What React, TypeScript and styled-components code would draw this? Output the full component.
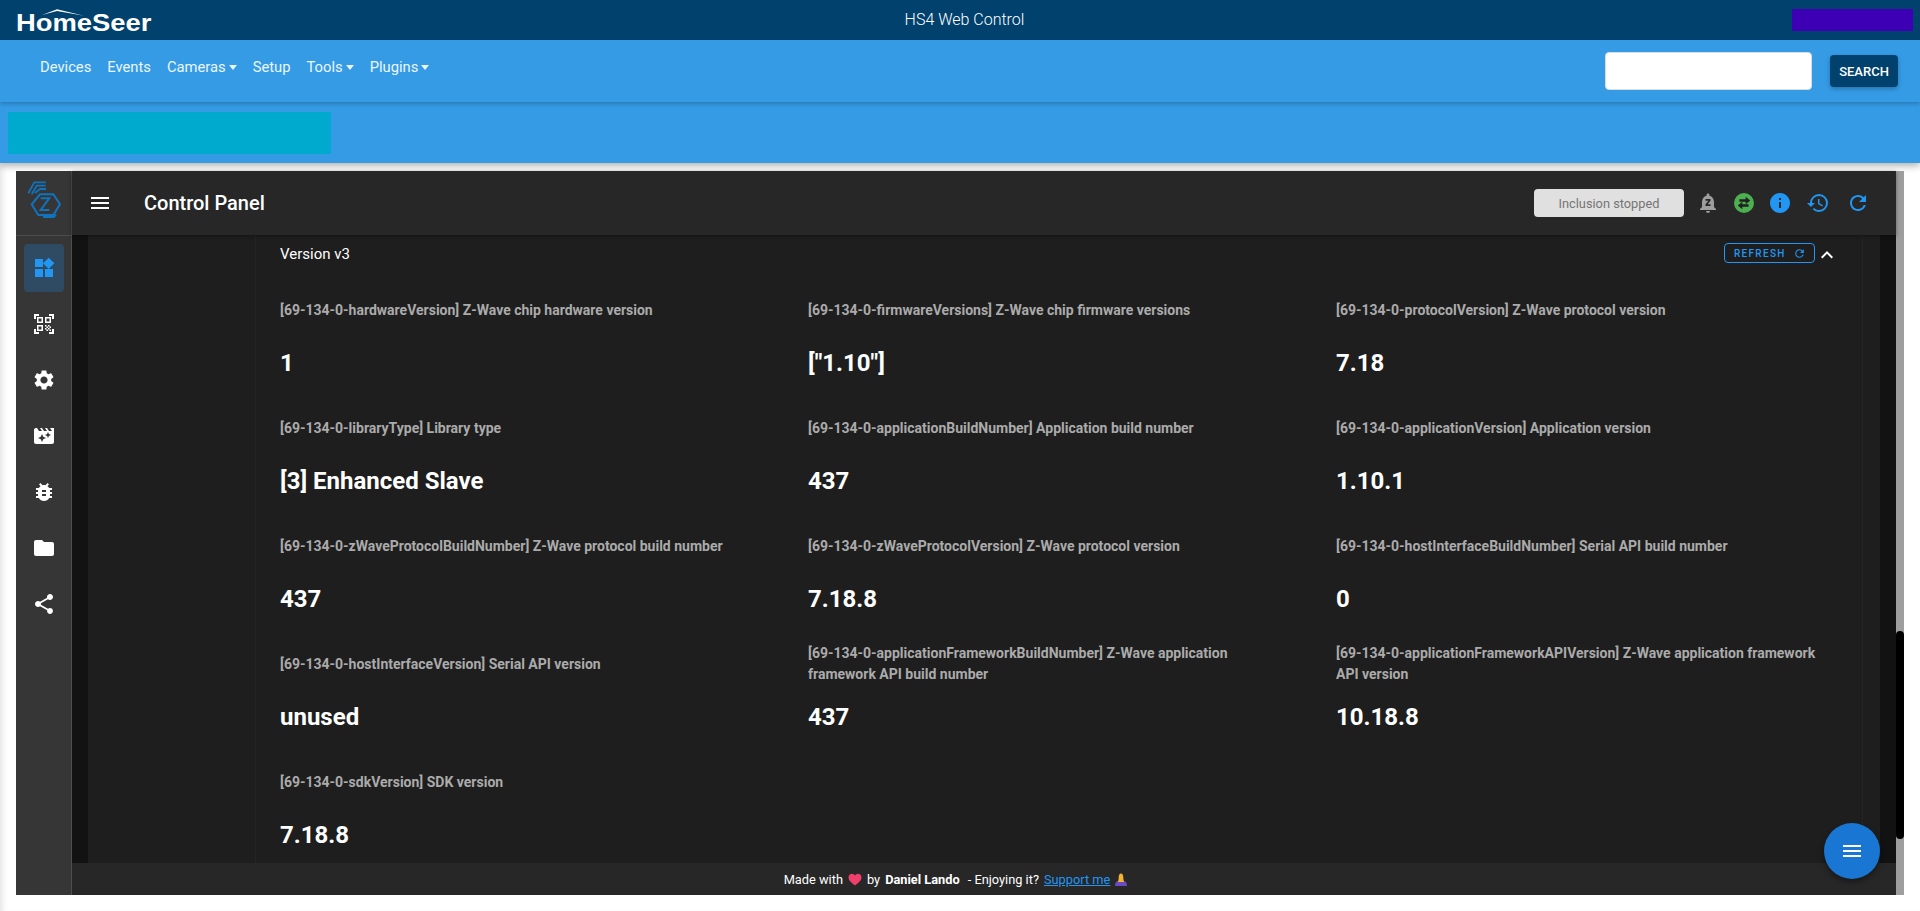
import styled, { createGlobalStyle } from "styled-components";
import {
  MdBugReport,
  MdExpandLess,
  MdFolder,
  MdHistory,
  MdInfo,
  MdMenu,
  MdMovieFilter,
  MdNotificationsPaused,
  MdQrCodeScanner,
  MdRefresh,
  MdSettings,
  MdShare,
  MdWidgets,
} from "react-icons/md";

const GlobalStyle = createGlobalStyle`
  html, body {
    margin: 0;
    padding: 0;
    height: 100%;
    background: #ffffff;
    overflow: hidden;
  }
  * {
    box-sizing: border-box;
  }
`;

const navItems = [
  { label: "Devices" },
  { label: "Events" },
  { label: "Cameras", caret: true },
  { label: "Setup" },
  { label: "Tools", caret: true },
  { label: "Plugins", caret: true },
];

const sideItems = [
  { icon: <MdWidgets />, active: true },
  { icon: <MdQrCodeScanner /> },
  { icon: <MdSettings /> },
  { icon: <MdMovieFilter /> },
  { icon: <MdBugReport /> },
  { icon: <MdFolder /> },
  { icon: <MdShare /> },
];

const values = [
  { label: "[69-134-0-hardwareVersion] Z-Wave chip hardware version", value: "1" },
  { label: "[69-134-0-firmwareVersions] Z-Wave chip firmware versions", value: '["1.10"]' },
  { label: "[69-134-0-protocolVersion] Z-Wave protocol version", value: "7.18" },
  { label: "[69-134-0-libraryType] Library type", value: "[3] Enhanced Slave" },
  { label: "[69-134-0-applicationBuildNumber] Application build number", value: "437" },
  { label: "[69-134-0-applicationVersion] Application version", value: "1.10.1" },
  { label: "[69-134-0-zWaveProtocolBuildNumber] Z-Wave protocol build number", value: "437" },
  { label: "[69-134-0-zWaveProtocolVersion] Z-Wave protocol version", value: "7.18.8" },
  { label: "[69-134-0-hostInterfaceBuildNumber] Serial API build number", value: "0" },
  { label: "[69-134-0-hostInterfaceVersion] Serial API version", value: "unused" },
  {
    label: "[69-134-0-applicationFrameworkBuildNumber] Z-Wave application framework API build number",
    value: "437",
  },
  {
    label: "[69-134-0-applicationFrameworkAPIVersion] Z-Wave application framework API version",
    value: "10.18.8",
  },
  { label: "[69-134-0-sdkVersion] SDK version", value: "7.18.8" },
];

export default function App() {
  return (
    <Page>
      <GlobalStyle />
      <TopBar>
        <Logo>
          <LogoRoof viewBox="0 0 42 7" preserveAspectRatio="none">
            <path d="M0 6 L15 0.3 L42 6.7 L15 2 Z" fill="#ffffff" />
          </LogoRoof>
          <LogoText>HomeSeer</LogoText>
        </Logo>
        <TopTitle>HS4 Web Control</TopTitle>
        <PurpleBlock />
      </TopBar>
      <NavBar>
        <NavList>
          {navItems.map((item) => (
            <NavLink key={item.label}>
              {item.label}
              {item.caret && <Caret />}
            </NavLink>
          ))}
        </NavList>
        <SearchForm>
          <SearchInput />
          <SearchButton>SEARCH</SearchButton>
        </SearchForm>
      </NavBar>
      <Banner>
        <TealBlock />
      </Banner>
      <Frame>
        <Sidebar>
          <SideLogo>
            <svg width="55" height="64" viewBox="0 0 55 64" fill="none" stroke="#1173bd" strokeWidth="1.8">
              <path d="M12.3 22.3 L18.3 11.3 H29.7" />
              <path d="M15.7 23.3 L20.7 14.7 H29.7" />
              <path d="M19 22 L24 18 H30" />
              <path d="M24 23.3 H37.3 L44 33.3 L37.3 44 H22.3 L15.7 33.3 Z" strokeWidth="2" />
              <path d="M24.7 27.3 H33.3 L24.7 39 H33.3" strokeWidth="2" />
              <path d="M27 46 H38 L40 43.5" />
            </svg>
          </SideLogo>
          <SideList>
            {sideItems.map((item, i) => (
              <SideItem key={i} $active={item.active}>
                {item.icon}
              </SideItem>
            ))}
          </SideList>
        </Sidebar>
        <Main>
          <Header>
            <HeaderButton>
              <MdMenu />
            </HeaderButton>
            <HeaderTitle>Control Panel</HeaderTitle>
            <HeaderActions>
              <StatusChip>Inclusion stopped</StatusChip>
              <ActionIcon $color="#9e9e9e">
                <MdNotificationsPaused />
              </ActionIcon>
              <ActionIcon $color="#212121">
                <GreenDot>
                  <svg width="20" height="20" viewBox="0 0 24 24" fill="currentColor">
                    <path d="M14 4.5 L19.5 9 L14 13.5 V10.4 H6.5 V7.6 H14 Z" />
                    <path d="M10 10.5 L4.5 15 L10 19.5 V16.4 H17.5 V13.6 H10 Z" />
                  </svg>
                </GreenDot>
              </ActionIcon>
              <ActionIcon $color="#2196f3">
                <MdInfo />
              </ActionIcon>
              <ActionIcon $color="#2196f3" $wide>
                <MdHistory />
              </ActionIcon>
              <ActionIcon $color="#2196f3" $wide>
                <MdRefresh />
              </ActionIcon>
            </HeaderActions>
          </Header>
          <ContentRow>
            <Gutter />
            <Card>
              <CardInner>
                <CardHead>
                  <CardTitle>Version v3</CardTitle>
                  <RefreshButton>
                    REFRESH
                    <MdRefresh />
                  </RefreshButton>
                  <CollapseIcon>
                    <MdExpandLess />
                  </CollapseIcon>
                </CardHead>
                <ValueGrid>
                  {values.map((v) => (
                    <ValueCell key={v.label}>
                      <ValueLabel>{v.label}</ValueLabel>
                      <ValueText>{v.value}</ValueText>
                    </ValueCell>
                  ))}
                </ValueGrid>
              </CardInner>
            </Card>
            <Gutter />
          </ContentRow>
          <Footer>
            Made with
            <svg width="14" height="13" viewBox="0 0 14 13">
              <path
                d="M7 12.5 C2.5 9 0.5 7 0.5 4.2 C0.5 2 2.2 0.7 3.9 0.7 C5.2 0.7 6.3 1.4 7 2.6 C7.7 1.4 8.8 0.7 10.1 0.7 C11.8 0.7 13.5 2 13.5 4.2 C13.5 7 11.5 9 7 12.5 Z"
                fill="#ef3f6b"
              />
            </svg>
            by <strong>Daniel Lando</strong>
            <FooterText>- Enjoying it?</FooterText>
            <SupportLink>
              Support me
              <svg width="14" height="13" viewBox="0 0 14 13">
                <path d="M1 13 C1 9 3 8 4.5 8 H9.5 C11 8 13 9 13 13 Z" fill="#6a4bc4" />
                <path d="M4.6 6 C4.6 2 5.4 0.5 7 0.5 C8.6 0.5 9.4 2 9.4 6 L10 9 H4 Z" fill="#f2b431" />
              </svg>
            </SupportLink>
          </Footer>
          <Fab>
            <MdMenu />
          </Fab>
        </Main>
        <Scrollbar>
          <ScrollThumb />
        </Scrollbar>
      </Frame>
    </Page>
  );
}

const Page = styled.div`
  width: 1920px;
  height: 911px;
  display: flex;
  flex-direction: column;
  font-family: Roboto, "Liberation Sans", sans-serif;
  background: #ffffff;
  box-shadow: inset 7px 0 6px -5px rgba(0, 0, 0, 0.12);
  overflow: hidden;
`;

const TopBar = styled.div`
  height: 40px;
  flex: none;
  display: grid;
  grid-template-columns: 1fr auto 1fr;
  align-items: center;
  padding: 0 7px 0 16px;
  background: #00416d;
  color: #ffffff;
`;

const Logo = styled.div`
  position: relative;
  height: 40px;
  display: flex;
  align-items: center;
`;

const LogoRoof = styled.svg`
  position: absolute;
  left: 26px;
  top: 9px;
  width: 42px;
  height: 7px;
`;

const LogoText = styled.span`
  font-family: "Liberation Sans", sans-serif;
  font-size: 23px;
  font-weight: 700;
  line-height: 40px;
  padding-top: 5px;
  transform: scaleX(1.19);
  transform-origin: left center;
`;

const TopTitle = styled.div`
  font-size: 16px;
  font-weight: 300;
  line-height: 40px;
`;

const PurpleBlock = styled.div`
  justify-self: end;
  width: 121px;
  height: 22px;
  background: #3d00b5;
`;

const NavBar = styled.div`
  height: 62px;
  flex: none;
  display: flex;
  justify-content: space-between;
  padding: 12px 22px 0 32px;
  background: #359be5;
  box-shadow: 0 2px 4px rgba(0, 0, 0, 0.22);
  position: relative;
`;

const NavList = styled.div`
  display: flex;
  align-items: flex-start;
`;

const NavLink = styled.a`
  display: flex;
  align-items: center;
  padding: 0 8px;
  height: 30px;
  font-size: 14.75px;
  color: #ecf6fd;
`;

const Caret = styled.span`
  margin-left: 3px;
  border-top: 5px solid #ecf6fd;
  border-left: 4.5px solid transparent;
  border-right: 4.5px solid transparent;
`;

const SearchForm = styled.div`
  display: flex;
  align-items: flex-start;
  gap: 18px;
`;

const SearchInput = styled.div`
  width: 207px;
  height: 38px;
  background: #ffffff;
  border: 1px solid #d8dde2;
  border-radius: 4px;
`;

const SearchButton = styled.button`
  width: 68px;
  height: 32px;
  margin-top: 3px;
  padding: 0;
  border: none;
  border-radius: 4px;
  background: #00416d;
  color: #ffffff;
  font: 500 13px Roboto, sans-serif;
  box-shadow: 0 2px 4px rgba(0, 0, 0, 0.25);
`;

const Banner = styled.div`
  height: 61px;
  flex: none;
  padding: 10px 0 0 8px;
  background: #359be5;
  box-shadow: 0 3px 7px rgba(0, 0, 0, 0.3);
`;

const TealBlock = styled.div`
  width: 323px;
  height: 42px;
  background: #00a9ce;
`;

const Frame = styled.div`
  width: 1888px;
  height: 724px;
  margin: 8px 0 0 16px;
  flex: none;
  display: flex;
`;

const Sidebar = styled.div`
  width: 56px;
  flex: none;
  background: #363636;
  border-right: 1px solid #4e4e4e;
`;

const SideLogo = styled.div`
  height: 65px;
  display: flex;
  border-bottom: 1px solid #4e4e4e;
`;

const SideList = styled.div`
  display: flex;
  flex-direction: column;
  gap: 8px;
  padding: 8px 8px 0;
`;

const SideItem = styled.div<{ $active?: boolean }>`
  width: 40px;
  height: 48px;
  display: flex;
  align-items: center;
  justify-content: center;
  border-radius: 4px;
  font-size: 24px;
  color: ${(p) => (p.$active ? "#2196f3" : "#ffffff")};
  background: ${(p) => (p.$active ? "#2f4b63" : "transparent")};
`;

const Main = styled.div`
  position: relative;
  flex: 1;
  min-width: 0;
  display: flex;
  flex-direction: column;
`;

const Header = styled.div`
  height: 64px;
  flex: none;
  display: flex;
  align-items: center;
  padding: 0 18px 0 16px;
  background: #272727;
  box-shadow: 0 1px 4px rgba(0, 0, 0, 0.4);
  position: relative;
  color: #ffffff;
`;

const HeaderButton = styled.div`
  display: flex;
  font-size: 24px;
`;

const HeaderTitle = styled.div`
  margin-left: 32px;
  font-size: 20px;
  font-weight: 500;
`;

const HeaderActions = styled.div`
  margin-left: auto;
  display: flex;
  align-items: center;
`;

const StatusChip = styled.div`
  width: 150px;
  height: 28px;
  margin-right: 6px;
  display: flex;
  align-items: center;
  justify-content: center;
  border-radius: 4px;
  background: #e0e0e0;
  color: #757575;
  font-size: 12.8px;
`;

const ActionIcon = styled.div<{ $color: string; $wide?: boolean }>`
  width: ${(p) => (p.$wide ? 40 : 36)}px;
  height: 36px;
  display: flex;
  align-items: center;
  justify-content: center;
  color: ${(p) => p.$color};
  font-size: 24px;
`;

const GreenDot = styled.div`
  width: 20px;
  height: 20px;
  display: flex;
  border-radius: 50%;
  background: #4caf50;
`;

const ContentRow = styled.div`
  flex: 1;
  min-height: 0;
  display: flex;
  background: #121212;
  overflow: hidden;
`;

const Gutter = styled.div`
  width: 16px;
  flex: none;
`;

const Card = styled.div`
  flex: 1;
  min-width: 0;
  padding: 0 17px 0 167px;
  background: #1e1e1e;
`;

const CardInner = styled.div`
  height: 100%;
  padding-left: 24px;
  border-left: 1px solid #242424;
  border-right: 1px solid #242424;
`;

const CardHead = styled.div`
  height: 54px;
  display: flex;
  align-items: flex-start;
  padding-top: 8px;
  padding-right: 23px;
  color: #ffffff;
`;

const CardTitle = styled.div`
  font-size: 15px;
  line-height: 22px;
`;

const RefreshButton = styled.button`
  margin-left: auto;
  width: 91px;
  height: 20px;
  display: flex;
  align-items: center;
  justify-content: space-between;
  padding: 0 8px 0 9px;
  background: transparent;
  border: 1px solid #2196f3;
  border-radius: 4px;
  color: #2196f3;
  font: 500 10px Roboto, sans-serif;
  letter-spacing: 1.3px;
  svg {
    font-size: 13px;
  }
`;

const CollapseIcon = styled.div`
  width: 24px;
  display: flex;
  justify-content: center;
  font-size: 24px;
  line-height: 0;
`;

const ValueGrid = styled.div`
  display: grid;
  grid-template-columns: repeat(3, 528px);
  grid-auto-rows: 118px;
`;

const ValueCell = styled.div`
  padding-right: 44px;
`;

const ValueLabel = styled.div`
  height: 42px;
  display: flex;
  align-items: center;
  font-size: 14px;
  font-weight: 700;
  line-height: 21px;
  color: #ababab;
`;

const ValueText = styled.div`
  margin-top: 16px;
  font-size: 24px;
  font-weight: 700;
  line-height: 32px;
  color: #ffffff;
`;

const Footer = styled.div`
  height: 32px;
  flex: none;
  display: flex;
  align-items: center;
  justify-content: center;
  gap: 5px;
  padding-right: 56px;
  background: #272727;
  color: #ffffff;
  font-size: 12.8px;
  strong {
    font-weight: 700;
  }
`;

const FooterText = styled.span`
  margin-left: 3px;
`;

const SupportLink = styled.a`
  display: inline-flex;
  align-items: center;
  gap: 4px;
  color: #2196f3;
  text-decoration: underline;
`;

const Fab = styled.div`
  position: absolute;
  right: 16px;
  bottom: 16px;
  width: 56px;
  height: 56px;
  display: flex;
  align-items: center;
  justify-content: center;
  border-radius: 50%;
  background: #1976d2;
  color: #ffffff;
  font-size: 24px;
  box-shadow: 0 3px 6px rgba(0, 0, 0, 0.4);
`;

const Scrollbar = styled.div`
  width: 8px;
  flex: none;
  padding-top: 460px;
  background: #9e9e9e;
`;

const ScrollThumb = styled.div`
  height: 208px;
  border-radius: 4px;
  background: #000000;
`;
